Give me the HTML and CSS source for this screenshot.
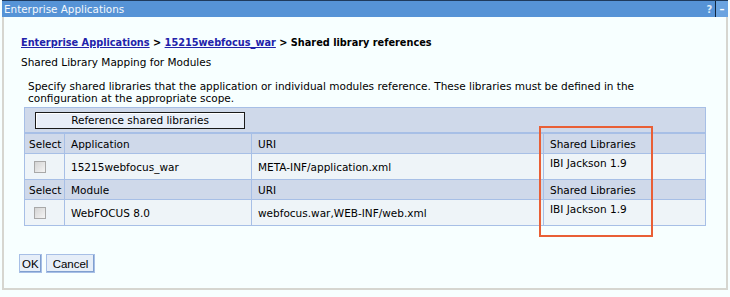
FILE: index.html
```html
<!DOCTYPE html>
<html>
<head>
<meta charset="utf-8">
<link rel="stylesheet" href="styles.css">
</head>
<body>
<div class="portlet">
  <div class="titlebar">
    <span class="title">Enterprise Applications</span>
    <span class="tools"><span class="help">?</span><span class="min">–</span></span>
  </div>
  <div class="frame">
    <div class="crumbs"><a href="#">Enterprise Applications</a> &gt; <a href="#">15215webfocus_war</a> &gt; Shared library references</div>
    <div class="subtitle">Shared Library Mapping for Modules</div>
    <p class="desc">Specify shared libraries that the application or individual modules reference. These libraries must be defined in the configuration at the appropriate scope.</p>
    <div class="tablewrap">
      <table class="grid">
        <tr class="btnrow"><td colspan="4"><button class="refbtn">Reference shared libraries</button></td></tr>
        <tr class="head"><td class="c1">Select</td><td class="c2">Application</td><td class="c3">URI</td><td class="c4">Shared Libraries</td></tr>
        <tr class="data"><td class="c1"><span class="chk"></span></td><td>15215webfocus_war</td><td>META-INF/application.xml</td><td class="lib">IBI Jackson 1.9</td></tr>
        <tr class="head"><td class="c1">Select</td><td>Module</td><td>URI</td><td>Shared Libraries</td></tr>
        <tr class="data"><td class="c1"><span class="chk"></span></td><td>WebFOCUS 8.0</td><td>webfocus.war,WEB-INF/web.xml</td><td class="lib">IBI Jackson 1.9</td></tr>
      </table>
      <div class="highlight"></div>
    </div>
    <div class="actions"><button class="btn ok">OK</button><button class="btn">Cancel</button></div>
  </div>
</div>
</body>
</html>
```

FILE: styles.css
```css
html, body { margin: 0; padding: 0; }
body {
  background: #f7ffff;
  font-family: "DejaVu Sans", Verdana, sans-serif;
  font-size: 10.5px;
  color: #000;
  width: 730px;
  height: 297px;
  overflow: hidden;
}
.portlet { margin: 0 2px 0 2px; width: 726px; }
.titlebar {
  height: 16px;
  background: #5693d6;
  border-top: 1px solid #1f3a5c;
  display: flex;
  align-items: center;
  justify-content: space-between;
  color: #fff;
}
.title { padding-left: 2px; font-size: 10.4px; color: #f4f8fc; }
.tools { display: flex; height: 16px; align-items: stretch; }
.help { width: 11px; font-weight: bold; color: #dde9f7; font-size: 10px; display: flex; align-items: center; justify-content: center; border-right: 1px solid #10243c; }
.min { width: 12px; background: #6aa3e0; color: #fff; font-weight: bold; display: flex; align-items: center; justify-content: center; font-size: 10px; }
.frame {
  border-left: 2px solid #d6d6d0;
  border-right: 2px solid #d6d6d0;
  border-bottom: 2px solid #d6d6d0;
  height: 273px;
  box-sizing: border-box;
  padding: 19px 0 0 17px;
}
.crumbs { font-weight: bold; font-size: 9.75px; height: 14px; line-height: 14px; }
.crumbs a { color: #2222aa; text-decoration: underline; }
.subtitle { margin-top: 5px; height: 14px; line-height: 14px; }
.desc { margin: 11px 0 0 7px; line-height: 12px; width: 660px; }
.tablewrap { position: relative; margin: 3px 0 0 3px; width: 682px; }
.grid {
  border-collapse: collapse;
  width: 682px;
  border: 1px solid #a7bfe6;
  line-height: 12px;
}
.grid td { border: 1px solid #a7bfe6; padding: 0 0 0 6px; vertical-align: middle; white-space: nowrap; }
.btnrow td { background: #cfd9ea; height: 24px; padding-left: 10px; border-bottom: 2px solid #a7bfe6; }
.refbtn {
  font-family: "DejaVu Sans", Verdana, sans-serif;
  font-size: 10.5px;
  width: 210px;
  height: 17px;
  background: #e8eef8;
  border: 1px solid #1a1a1a;
  box-shadow: inset 1px 1px 0 #fff;
  padding: 0;
  line-height: 15px;
}
.head td { background: #cfd9ea; height: 19px; }
.data td { background: #eef4f8; height: 25px; }
.grid .c1 { width: 35px; padding-left: 4px; }
.grid .c2 { width: 180px; }
.grid .c3 { width: 285px; }
.data td.lib { vertical-align: top; padding-top: 3px; height: 22px; }
.chk {
  display: block;
  width: 10px; height: 10px;
  margin-left: 5px;
  border: 1px solid #a8a8a8;
  background: linear-gradient(135deg, #d4d4d4, #f4f4f4);
}
.highlight {
  position: absolute;
  left: 515px; top: 19px;
  width: 110px; height: 107px;
  border: 2px solid #e95f36;
}
.actions { display: flex; gap: 4px; margin: 28px 0 0 -2px; }
.btn {
  font-family: "Liberation Sans", Arial, sans-serif;
  font-size: 11.5px;
  height: 19px;
  padding: 0 6px;
  background: #e6eef8;
  border: 1px solid #a7bfe6;
  box-shadow: inset -1px -1px 0 #7f9fcf;
  color: #000;
}
.btn.ok { padding: 0 2px; }
```
